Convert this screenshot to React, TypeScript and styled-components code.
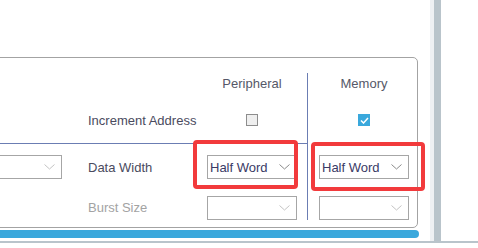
import React from 'react';
import styled, { createGlobalStyle } from 'styled-components';

const GlobalStyle = createGlobalStyle`
  html, body {
    margin: 0;
    padding: 0;
    background: #ffffff;
    overflow: hidden;
  }
  body {
    font-family: "Liberation Sans", Arial, sans-serif;
  }
`;

const Screen = styled.div`
  display: flex;
  flex-flow: column nowrap;
  width: 478px;
  height: 248px;
  background: #ffffff;
`;

const Main = styled.div`
  display: flex;
  flex-flow: row nowrap;
  height: 241px;
`;

const Content = styled.div`
  position: relative;
  display: flex;
  flex-flow: column nowrap;
  width: 430px;
  padding-top: 57px;
  box-sizing: border-box;
  overflow: visible;
`;

const Gutter = styled.div`
  width: 4px;
  background: #eef0f3;
`;

const ScrollTrack = styled.div`
  width: 7px;
  background: #b9c4cb;
`;

const Filler = styled.div`
  flex: 1;
  background: #ffffff;
`;

const BottomRule = styled.div`
  height: 2px;
  background: #b9c4cb;
`;

const Panel = styled.div`
  display: grid;
  grid-template-columns: 117px 119px 100px 1px 108px;
  grid-template-rows: 50px 24px 11px 1px 11px 24px 16px 25px 7px;
  width: 446px;
  margin-left: -30px;
  border: 1px solid #a3a3a3;
  border-radius: 0 5px 5px 0;
  background: #ffffff;
`;

const Cell = styled.div<{ $row: number; $col: number; $pad?: number }>`
  grid-row: ${({ $row }) => $row};
  grid-column: ${({ $col }) => $col};
  display: flex;
  align-items: center;
  padding-left: ${({ $pad }) => $pad ?? 0}px;
`;

const Heading = styled.div`
  width: 90px;
  text-align: center;
  font-size: 13px;
  color: #555868;
`;

const Label = styled.span<{ $muted?: boolean }>`
  font-size: 13px;
  color: ${({ $muted }) => ($muted ? '#a3a3a3' : '#4a4b5e')};
  white-space: nowrap;
`;

const CheckSlot = styled.div`
  display: flex;
  justify-content: center;
  width: 90px;
`;

const Check = styled.span<{ $on?: boolean }>`
  display: flex;
  align-items: center;
  justify-content: center;
  width: 12px;
  height: 12px;
  box-sizing: border-box;
  border: 1px solid ${({ $on }) => ($on ? '#3aa8dc' : '#8d8d8d')};
  background: ${({ $on }) => ($on ? '#3aa8dc' : '#efefef')};
`;

const Divider = styled.div`
  grid-row: 1 / -1;
  grid-column: 4;
  margin: 15px 0 7px;
  background: #6b7db3;
`;

const Separator = styled.div`
  grid-row: 4;
  grid-column: 1 / 4;
  background: #6b7db3;
`;

const Select = styled.div<{ $width?: number }>`
  display: flex;
  align-items: center;
  justify-content: space-between;
  width: ${({ $width }) => $width ?? 90}px;
  height: 24px;
  box-sizing: border-box;
  padding: 0 6px 0 2px;
  border: 1px solid #a6a6a6;
  background: #ffffff;
  font-size: 13px;
  color: #3a3a66;
`;

const LeftSlot = styled.div`
  grid-row: 6;
  grid-column: 1;
  justify-self: end;
  margin-right: 26px;
`;

const ProgressBar = styled.div`
  width: 449px;
  height: 8px;
  margin: 2px 0 0 -30px;
  border-radius: 0 4px 4px 0;
  background: #3aa8dc;
`;

const Highlight = styled.div<{ $x: number; $y: number; $w: number; $h: number }>`
  position: absolute;
  left: ${({ $x }) => $x}px;
  top: ${({ $y }) => $y}px;
  width: ${({ $w }) => $w}px;
  height: ${({ $h }) => $h}px;
  box-sizing: border-box;
  border: 4px solid #f23a3c;
  border-radius: 4px;
  pointer-events: none;
`;

const Chevron: React.FC<{ muted?: boolean }> = ({ muted }) => (
  <svg width="11" height="6" viewBox="0 0 11 6">
    <path d="M0.5 0.5 L5.5 5 L10.5 0.5" fill="none" stroke={muted ? '#c4c4c4' : '#8a8a8a'} strokeWidth="1" />
  </svg>
);

const Tick = () => (
  <svg width="9" height="7" viewBox="0 0 9 7">
    <path d="M1 3.5 L3.5 6 L8 1" fill="none" stroke="#ffffff" strokeWidth="1.5" />
  </svg>
);

export default function App() {
  return (
    <>
      <GlobalStyle />
      <Screen>
        <Main>
          <Content>
            <Panel>
              <Cell $row={1} $col={3}>
                <Heading>Peripheral</Heading>
              </Cell>
              <Cell $row={1} $col={5} $pad={11}>
                <Heading>Memory</Heading>
              </Cell>

              <Cell $row={2} $col={2}>
                <Label>Increment Address</Label>
              </Cell>
              <Cell $row={2} $col={3}>
                <CheckSlot>
                  <Check />
                </CheckSlot>
              </Cell>
              <Cell $row={2} $col={5} $pad={11}>
                <CheckSlot>
                  <Check $on>
                    <Tick />
                  </Check>
                </CheckSlot>
              </Cell>

              <Separator />
              <Divider />

              <LeftSlot>
                <Select $width={100}>
                  <span />
                  <Chevron muted />
                </Select>
              </LeftSlot>
              <Cell $row={6} $col={2}>
                <Label>Data Width</Label>
              </Cell>
              <Cell $row={6} $col={3}>
                <Select>
                  <span>Half Word</span>
                  <Chevron />
                </Select>
              </Cell>
              <Cell $row={6} $col={5} $pad={11}>
                <Select>
                  <span>Half Word</span>
                  <Chevron />
                </Select>
              </Cell>

              <Cell $row={8} $col={2}>
                <Label $muted>Burst Size</Label>
              </Cell>
              <Cell $row={8} $col={3}>
                <Select>
                  <span />
                  <Chevron muted />
                </Select>
              </Cell>
              <Cell $row={8} $col={5} $pad={11}>
                <Select>
                  <span />
                  <Chevron muted />
                </Select>
              </Cell>
            </Panel>
            <ProgressBar />
            <Highlight $x={193} $y={140} $w={105} $h={49} />
            <Highlight $x={311} $y={142} $w={114} $h={49} />
          </Content>
          <Gutter />
          <ScrollTrack />
          <Filler />
        </Main>
        <BottomRule />
      </Screen>
    </>
  );
}
